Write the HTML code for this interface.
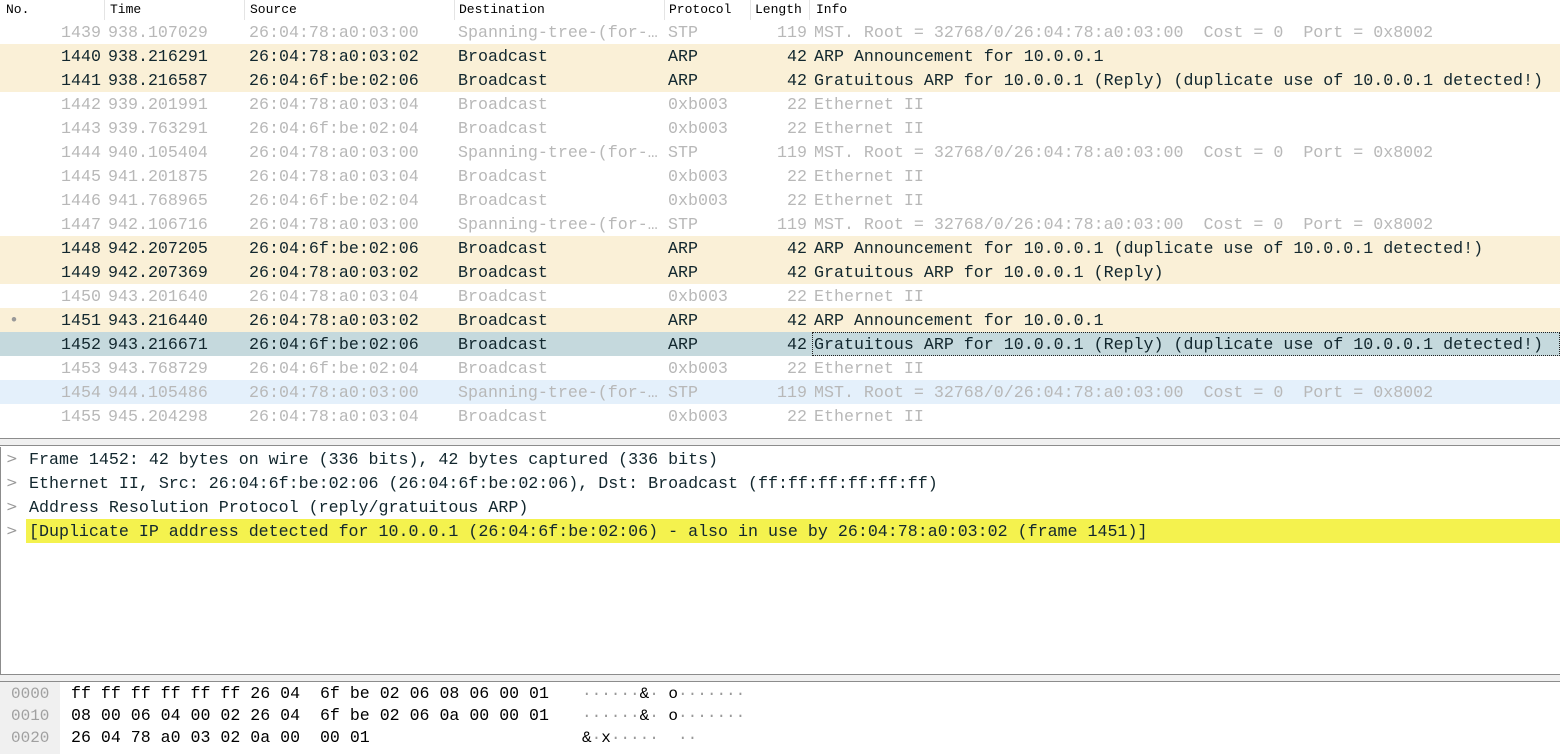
<!DOCTYPE html>
<html><head><meta charset="utf-8"><style>
body{margin:0;width:1560px;height:754px;overflow:hidden;background:#fff;font-family:"Liberation Mono",monospace;position:relative}
.hdr{position:absolute;top:0;left:0;width:1560px;height:20px;background:#fff;font-size:13px;color:#000}
.hdr span{position:absolute;top:2px}
.hdr i{position:absolute;top:0;width:1px;height:20px;background:#e4e4e4}
.r{position:absolute;left:0;width:1560px;height:24px;font-size:16.65px;line-height:26px;color:#b8b8b8;white-space:pre}
.r span{position:absolute;top:0}
.d{color:#12272e}
.arp{background:#faf0d7}
.sel{background:#c5d9dd}
.stp{background:#e4f0fb}
.no{right:1459px;text-align:right}
.t{left:108px}.s{left:249px}.ds{left:458px}.p{left:668px}.l{right:753px;text-align:right}.i{left:814px}
.sep{position:absolute;left:0;width:1560px}
.det{position:absolute;left:0;width:1560px;height:24px;font-size:16.65px;line-height:26px;color:#12272e;white-space:pre}
.det b{font-weight:normal;position:absolute;left:6px;color:#999;font-family:"DejaVu Sans",sans-serif;font-size:14px;line-height:24px}
.det span{position:absolute;left:29px}
.hx{position:absolute;font-size:16.6px;line-height:22px;white-space:pre;color:#000}
</style></head><body>
<div class="hdr">
<span style="left:6px">No.</span><i style="left:104px"></i>
<span style="left:110px">Time</span><i style="left:244px"></i>
<span style="left:250px">Source</span><i style="left:454px"></i>
<span style="left:459px">Destination</span><i style="left:664px"></i>
<span style="left:669px">Protocol</span><i style="left:750px"></i>
<span style="left:755px">Length</span><i style="left:809px"></i>
<span style="left:816px">Info</span>
</div>

<div class="r" style="top:20px"><span class="no">1439</span><span class="t">938.107029</span><span class="s">26:04:78:a0:03:00</span><span class="ds">Spanning-tree-(for-…</span><span class="p">STP</span><span class="l">119</span><span class="i">MST. Root = 32768/0/26:04:78:a0:03:00  Cost = 0  Port = 0x8002</span></div>
<div class="r d arp" style="top:44px"><span class="no">1440</span><span class="t">938.216291</span><span class="s">26:04:78:a0:03:02</span><span class="ds">Broadcast</span><span class="p">ARP</span><span class="l">42</span><span class="i">ARP Announcement for 10.0.0.1</span></div>
<div class="r d arp" style="top:68px"><span class="no">1441</span><span class="t">938.216587</span><span class="s">26:04:6f:be:02:06</span><span class="ds">Broadcast</span><span class="p">ARP</span><span class="l">42</span><span class="i">Gratuitous ARP for 10.0.0.1 (Reply) (duplicate use of 10.0.0.1 detected!)</span></div>
<div class="r" style="top:92px"><span class="no">1442</span><span class="t">939.201991</span><span class="s">26:04:78:a0:03:04</span><span class="ds">Broadcast</span><span class="p">0xb003</span><span class="l">22</span><span class="i">Ethernet II</span></div>
<div class="r" style="top:116px"><span class="no">1443</span><span class="t">939.763291</span><span class="s">26:04:6f:be:02:04</span><span class="ds">Broadcast</span><span class="p">0xb003</span><span class="l">22</span><span class="i">Ethernet II</span></div>
<div class="r" style="top:140px"><span class="no">1444</span><span class="t">940.105404</span><span class="s">26:04:78:a0:03:00</span><span class="ds">Spanning-tree-(for-…</span><span class="p">STP</span><span class="l">119</span><span class="i">MST. Root = 32768/0/26:04:78:a0:03:00  Cost = 0  Port = 0x8002</span></div>
<div class="r" style="top:164px"><span class="no">1445</span><span class="t">941.201875</span><span class="s">26:04:78:a0:03:04</span><span class="ds">Broadcast</span><span class="p">0xb003</span><span class="l">22</span><span class="i">Ethernet II</span></div>
<div class="r" style="top:188px"><span class="no">1446</span><span class="t">941.768965</span><span class="s">26:04:6f:be:02:04</span><span class="ds">Broadcast</span><span class="p">0xb003</span><span class="l">22</span><span class="i">Ethernet II</span></div>
<div class="r" style="top:212px"><span class="no">1447</span><span class="t">942.106716</span><span class="s">26:04:78:a0:03:00</span><span class="ds">Spanning-tree-(for-…</span><span class="p">STP</span><span class="l">119</span><span class="i">MST. Root = 32768/0/26:04:78:a0:03:00  Cost = 0  Port = 0x8002</span></div>
<div class="r d arp" style="top:236px"><span class="no">1448</span><span class="t">942.207205</span><span class="s">26:04:6f:be:02:06</span><span class="ds">Broadcast</span><span class="p">ARP</span><span class="l">42</span><span class="i">ARP Announcement for 10.0.0.1 (duplicate use of 10.0.0.1 detected!)</span></div>
<div class="r d arp" style="top:260px"><span class="no">1449</span><span class="t">942.207369</span><span class="s">26:04:78:a0:03:02</span><span class="ds">Broadcast</span><span class="p">ARP</span><span class="l">42</span><span class="i">Gratuitous ARP for 10.0.0.1 (Reply)</span></div>
<div class="r" style="top:284px"><span class="no">1450</span><span class="t">943.201640</span><span class="s">26:04:78:a0:03:04</span><span class="ds">Broadcast</span><span class="p">0xb003</span><span class="l">22</span><span class="i">Ethernet II</span></div>
<div class="r d arp" style="top:308px"><span style="left:9px;color:#999">•</span><span class="no">1451</span><span class="t">943.216440</span><span class="s">26:04:78:a0:03:02</span><span class="ds">Broadcast</span><span class="p">ARP</span><span class="l">42</span><span class="i">ARP Announcement for 10.0.0.1</span></div>
<div class="r d sel" style="top:332px"><span class="no">1452</span><span class="t">943.216671</span><span class="s">26:04:6f:be:02:06</span><span class="ds">Broadcast</span><span class="p">ARP</span><span class="l">42</span><span class="i" style="left:812px;width:745px;height:22px;border:1px dotted #222;line-height:24px;padding-left:1px">Gratuitous ARP for 10.0.0.1 (Reply) (duplicate use of 10.0.0.1 detected!)</span></div>
<div class="r" style="top:356px"><span class="no">1453</span><span class="t">943.768729</span><span class="s">26:04:6f:be:02:04</span><span class="ds">Broadcast</span><span class="p">0xb003</span><span class="l">22</span><span class="i">Ethernet II</span></div>
<div class="r stp" style="top:380px"><span class="no">1454</span><span class="t">944.105486</span><span class="s">26:04:78:a0:03:00</span><span class="ds">Spanning-tree-(for-…</span><span class="p">STP</span><span class="l">119</span><span class="i">MST. Root = 32768/0/26:04:78:a0:03:00  Cost = 0  Port = 0x8002</span></div>
<div class="r" style="top:404px"><span class="no">1455</span><span class="t">945.204298</span><span class="s">26:04:78:a0:03:04</span><span class="ds">Broadcast</span><span class="p">0xb003</span><span class="l">22</span><span class="i">Ethernet II</span></div>

<div class="sep" style="top:438px;background:#8c8c8c;height:1px"></div>
<div class="sep" style="top:439px;height:7px;background:#f0f0f0"></div>
<div class="sep" style="top:445px;height:1px;background:#8c8c8c"></div>
<div class="sep" style="top:446px;height:228px;background:#fff"></div>
<div class="det" style="top:447px"><b>&gt;</b><span>Frame 1452: 42 bytes on wire (336 bits), 42 bytes captured (336 bits)</span></div>
<div class="det" style="top:471px"><b>&gt;</b><span>Ethernet II, Src: 26:04:6f:be:02:06 (26:04:6f:be:02:06), Dst: Broadcast (ff:ff:ff:ff:ff:ff)</span></div>
<div class="det" style="top:495px"><b>&gt;</b><span>Address Resolution Protocol (reply/gratuitous ARP)</span></div>
<div class="det" style="top:519px"><b>&gt;</b><div style="position:absolute;left:26px;top:0;width:1534px;height:24px;background:#f4f24e"></div><span>[Duplicate IP address detected for 10.0.0.1 (26:04:6f:be:02:06) - also in use by 26:04:78:a0:03:02 (frame 1451)]</span></div>
<div class="sep" style="top:447px;left:0;width:1px;height:228px;background:#8c8c8c"></div>
<div class="sep" style="top:674px;height:1px;background:#8c8c8c"></div>
<div class="sep" style="top:675px;height:6px;background:#f0f0f0"></div>
<div class="sep" style="top:681px;height:1px;background:#8c8c8c"></div>
<div style="position:absolute;left:0;top:682px;width:60px;height:72px;background:#f0f0f0"></div>
<div class="hx" style="left:11px;top:683px;color:#a0a0a0;font-size:16px">0000
0010
0020</div>
<div class="hx" style="left:71px;top:683px">ff ff ff ff ff ff 26 04  6f be 02 06 08 06 00 01
08 00 06 04 00 02 26 04  6f be 02 06 0a 00 00 01
26 04 78 a0 03 02 0a 00  00 01</div>
<div class="hx" style="left:582px;top:683px;font-size:16px"><span style="color:#999">······</span>&amp;<span style="color:#999">·</span> o<span style="color:#999">·······</span>
<span style="color:#999">······</span>&amp;<span style="color:#999">·</span> o<span style="color:#999">·······</span>
&amp;<span style="color:#999">·</span>x<span style="color:#999">·····  ··</span></div>
</body></html>
